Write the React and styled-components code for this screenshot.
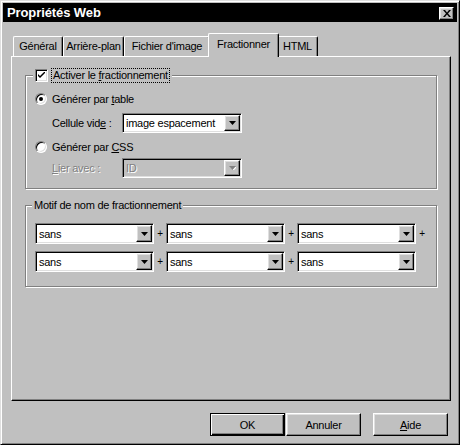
import React from "react"
import styled, { createGlobalStyle } from "styled-components"

const FACE = "#c0c0c0"
const SHADOW = "#808080"
const LIGHT = "#dfdfdf"

const GlobalStyle = createGlobalStyle`
  html, body {
    margin: 0;
    padding: 0;
    background: ${FACE};
  }
  body {
    font-family: "Liberation Sans", Arial, sans-serif;
    font-size: 11px;
    letter-spacing: -0.25px;
    color: #000;
  }
  * {
    box-sizing: border-box;
  }
`

const raised = `
  border: 1px solid;
  border-color: #fff #000 #000 #fff;
  box-shadow: inset -1px -1px 0 ${SHADOW}, inset 1px 1px 0 ${LIGHT};
`

const sunken = `
  border: 1px solid;
  border-color: ${SHADOW} #fff #fff ${SHADOW};
  box-shadow: inset 1px 1px 0 #000, inset -1px -1px 0 ${LIGHT};
`

const Window = styled.div`
  width: 460px;
  height: 445px;
  background: ${FACE};
  border: 1px solid;
  border-color: ${LIGHT} #000 #000 ${LIGHT};
  box-shadow: inset 1px 1px 0 #fff, inset -1px -1px 0 ${SHADOW};
  padding: 2px;
  display: flex;
  flex-direction: column;
`

const TitleBar = styled.div`
  height: 19px;
  background: #000;
  color: #fff;
  display: flex;
  align-items: flex-start;
  justify-content: space-between;
  padding: 0 3px 0 4px;
`

const Title = styled.span`
  font-weight: bold;
  font-size: 13px;
  letter-spacing: -0.1px;
  line-height: 19px;
`

const CloseButton = styled.span`
  ${raised}
  width: 15px;
  height: 13px;
  margin-top: 4px;
  background: ${FACE};
  display: flex;
  align-items: center;
  justify-content: center;
`

const Body = styled.div`
  flex: 1;
  padding: 11px 6px 0 8px;
  display: flex;
  flex-direction: column;
`

const TabStrip = styled.div`
  display: flex;
  align-items: flex-end;
  height: 23px;
  padding-left: 2px;
`

const Tab = styled.div`
  position: relative;
  z-index: ${(p) => (p.$active ? 2 : 1)};
  width: ${(p) => p.$w + (p.$active ? 4 : 0)}px;
  height: ${(p) => (p.$active ? 24 : 20)}px;
  margin: 0 ${(p) => (p.$active ? -2 : 0)}px ${(p) => (p.$active ? -1 : 0)}px;
  background: ${FACE};
  border-top: 1px solid #fff;
  border-left: 1px solid #fff;
  border-right: 1px solid #000;
  border-radius: 2px 2px 0 0;
  box-shadow: inset -1px 0 0 ${SHADOW};
  text-align: center;
  line-height: ${(p) => (p.$active ? 21 : 19)}px;
  white-space: nowrap;
`

const Panel = styled.div`
  height: 345px;
  border: 1px solid;
  border-color: #fff #000 #000 #fff;
  box-shadow: inset -1px -1px 0 ${SHADOW};
  padding: 11px 13px 0;
`

const Group = styled.fieldset`
  margin: ${(p) => p.$top}px 0 0;
  padding: 0;
  min-width: 0;
  border: 1px solid ${SHADOW};
  box-shadow: inset 1px 1px 0 #fff, 1px 1px 0 #fff;
`

const Legend = styled.legend`
  margin-left: ${(p) => p.$offset}px;
  padding: 0 2px;
  background: ${FACE};
  line-height: 13px;
  display: flex;
  align-items: center;
`

const CheckBox = styled.span`
  ${sunken}
  width: 13px;
  height: 13px;
  background: #fff;
  display: flex;
  align-items: center;
  justify-content: center;
`

const FocusLabel = styled.span`
  margin-left: 3px;
  padding: 0 1px;
  border: 1px dotted #000;
  line-height: 13px;
`

const GroupBody = styled.div`
  padding: ${(p) => p.$pad};
`

const RadioRow = styled.div`
  display: flex;
  align-items: center;
  gap: 5px;
  height: 16px;
  margin-top: ${(p) => p.$top || 0}px;
`

const Radio = styled.span`
  position: relative;
  width: 12px;
  height: 12px;
  border-radius: 50%;
  border: 1px solid;
  border-color: ${SHADOW} #fff #fff ${SHADOW};
  box-shadow: inset 1px 1px 0 #000, inset -1px -1px 0 ${LIGHT};
  background: #fff;

  &::after {
    content: "";
    display: ${(p) => (p.$checked ? "block" : "none")};
    position: absolute;
    left: 3px;
    top: 3px;
    width: 4px;
    height: 4px;
    border-radius: 50%;
    background: #000;
  }
`

const FieldRow = styled.div`
  display: flex;
  align-items: center;
  padding-left: 17px;
  margin-top: ${(p) => p.$top}px;
`

const FieldLabel = styled.span`
  width: 70px;
  color: ${(p) => (p.$disabled ? SHADOW : "#000")};
  text-shadow: ${(p) => (p.$disabled ? "1px 1px 0 #fff" : "none")};
`

const SelectBox = styled.div`
  ${sunken}
  width: ${(p) => p.$w}px;
  height: ${(p) => p.$h}px;
  padding: 1px;
  background: ${(p) => (p.$disabled ? FACE : "#fff")};
  display: flex;
  align-items: stretch;
`

const SelectText = styled.span`
  flex: 1;
  padding-left: 2px;
  display: flex;
  align-items: center;
  white-space: nowrap;
  overflow: hidden;
  color: ${(p) => (p.$disabled ? SHADOW : "#000")};
  text-shadow: ${(p) => (p.$disabled ? "1px 1px 0 #fff" : "none")};
`

const DropButton = styled.span`
  ${raised}
  width: 16px;
  background: ${FACE};
  display: flex;
  align-items: center;
  justify-content: center;
`

const PatternGrid = styled.div`
  display: grid;
  grid-template-columns: repeat(3, 119px 12px);
  grid-auto-rows: 21px;
  row-gap: 7px;
  align-items: center;
`

const Plus = styled.span`
  text-align: center;
  font-size: 10px;
`

const ButtonRow = styled.div`
  display: flex;
  justify-content: flex-end;
  padding-right: 3px;
  margin-top: 12px;
`

const Button = styled.button`
  ${raised}
  width: 75px;
  height: 23px;
  margin-left: ${(p) => p.$gap || 0}px;
  background: ${FACE};
  font: inherit;
  letter-spacing: inherit;
  color: #000;
  padding: 0;
  ${(p) =>
    p.$default &&
    `
    border-color: #000;
    box-shadow: inset 1px 1px 0 #fff, inset -1px -1px 0 #000, inset -2px -2px 0 ${SHADOW};
  `}
`

const U = styled.span`
  text-decoration: underline;
`

const Arrow = ({ disabled }) => (
  <svg width="7" height="4" viewBox="0 0 7 4">
    {disabled && <path d="M1 1h7L4.5 4.5z" fill="#fff" />}
    <path d="M0 0h7L3.5 4z" fill={disabled ? SHADOW : "#000"} />
  </svg>
)

const Select = ({ value, w = 119, h = 21, disabled }) => (
  <SelectBox $w={w} $h={h} $disabled={disabled}>
    <SelectText $disabled={disabled}>{value}</SelectText>
    <DropButton>
      <Arrow disabled={disabled} />
    </DropButton>
  </SelectBox>
)

const tabs = [
  { label: "Général", w: 50 },
  { label: "Arrière-plan", w: 61 },
  { label: "Fichier d'image", w: 86 },
  { label: "Fractionner", w: 67, active: true },
  { label: "HTML", w: 41 },
]

const App = () => {
  return (
    <>
      <GlobalStyle />
      <Window>
        <TitleBar>
          <Title>Propriétés Web</Title>
          <CloseButton>
            <svg width="8" height="7" viewBox="0 0 8 7">
              <path d="M0 0h2l2 2.5L6 0h2L5 3.5 8 7H6L4 4.5 2 7H0l3-3.5z" fill="#000" />
            </svg>
          </CloseButton>
        </TitleBar>
        <Body>
          <TabStrip>
            {tabs.map((t) => (
              <Tab key={t.label} $w={t.w} $active={t.active}>
                {t.label}
              </Tab>
            ))}
          </TabStrip>
          <Panel>
            <Group $top={0}>
              <Legend $offset={7}>
                <CheckBox>
                  <svg width="7" height="7" viewBox="0 0 7 7">
                    <path d="M0 2l2 2 5-5v2L2 6 0 4z" fill="#000" />
                  </svg>
                </CheckBox>
                <FocusLabel>
                  Activer le <U>f</U>ractionnement
                </FocusLabel>
              </Legend>
              <GroupBody $pad="8px 9px 10px">
                <RadioRow>
                  <Radio $checked />
                  <span>
                    Générer par <U>t</U>able
                  </span>
                </RadioRow>
                <FieldRow $top={6}>
                  <FieldLabel>
                    Cellule vid<U>e</U> :
                  </FieldLabel>
                  <Select value="image espacement" w={120} h={20} />
                </FieldRow>
                <RadioRow $top={6}>
                  <Radio />
                  <span>
                    Générer par <U>C</U>SS
                  </span>
                </RadioRow>
                <FieldRow $top={3}>
                  <FieldLabel $disabled>
                    <U>L</U>ier avec :
                  </FieldLabel>
                  <Select value="ID" w={120} h={20} disabled />
                </FieldRow>
              </GroupBody>
            </Group>
            <Group $top={10}>
              <Legend $offset={6}>Motif de nom de fractionnement</Legend>
              <GroupBody $pad="11px 9px 14px">
                <PatternGrid>
                  <Select value="sans" />
                  <Plus>+</Plus>
                  <Select value="sans" />
                  <Plus>+</Plus>
                  <Select value="sans" />
                  <Plus>+</Plus>
                  <Select value="sans" />
                  <Plus>+</Plus>
                  <Select value="sans" />
                  <Plus>+</Plus>
                  <Select value="sans" />
                </PatternGrid>
              </GroupBody>
            </Group>
          </Panel>
          <ButtonRow>
            <Button $default>OK</Button>
            <Button $gap={1}>Annuler</Button>
            <Button $gap={12}>
              <U>A</U>ide
            </Button>
          </ButtonRow>
        </Body>
      </Window>
    </>
  )
}

export default App
